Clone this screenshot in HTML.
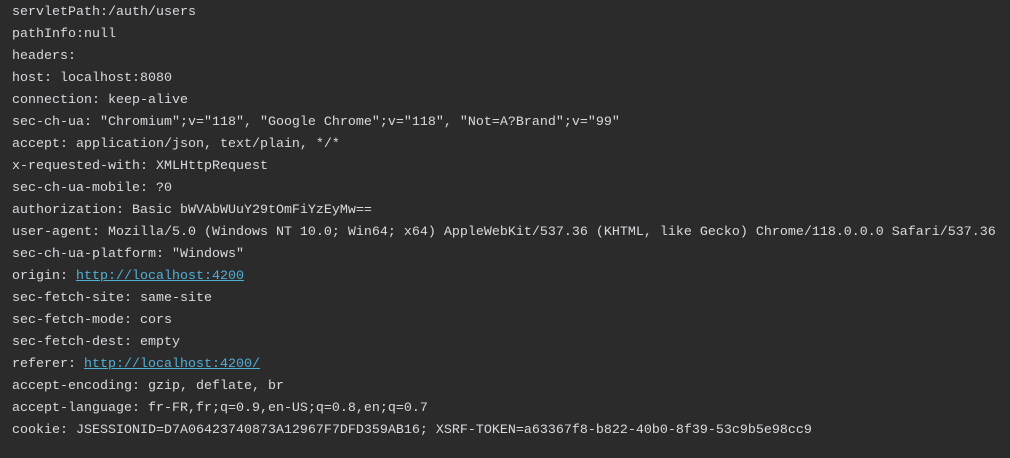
<!DOCTYPE html>
<html><head><style>
html,body{margin:0;padding:0;background:#2b2b2b;width:1010px;height:458px;overflow:hidden}
pre{margin:0;padding:2px 0 0 12px;font-family:"Liberation Mono",monospace;font-size:13.33px;line-height:22px;color:#d8dade}
a{color:#4fb0d8;text-decoration:underline}
</style></head><body><pre>servletPath:/auth/users
pathInfo:null
headers:
host: localhost:8080
connection: keep-alive
sec-ch-ua: "Chromium";v="118", "Google Chrome";v="118", "Not=A?Brand";v="99"
accept: application/json, text/plain, */*
x-requested-with: XMLHttpRequest
sec-ch-ua-mobile: ?0
authorization: Basic bWVAbWUuY29tOmFiYzEyMw==
user-agent: Mozilla/5.0 (Windows NT 10.0; Win64; x64) AppleWebKit/537.36 (KHTML, like Gecko) Chrome/118.0.0.0 Safari/537.36
sec-ch-ua-platform: "Windows"
origin: <a>http://localhost:4200</a>
sec-fetch-site: same-site
sec-fetch-mode: cors
sec-fetch-dest: empty
referer: <a>http://localhost:4200/</a>
accept-encoding: gzip, deflate, br
accept-language: fr-FR,fr;q=0.9,en-US;q=0.8,en;q=0.7
cookie: JSESSIONID=D7A06423740873A12967F7DFD359AB16; XSRF-TOKEN=a63367f8-b822-40b0-8f39-53c9b5e98cc9</pre></body></html>
